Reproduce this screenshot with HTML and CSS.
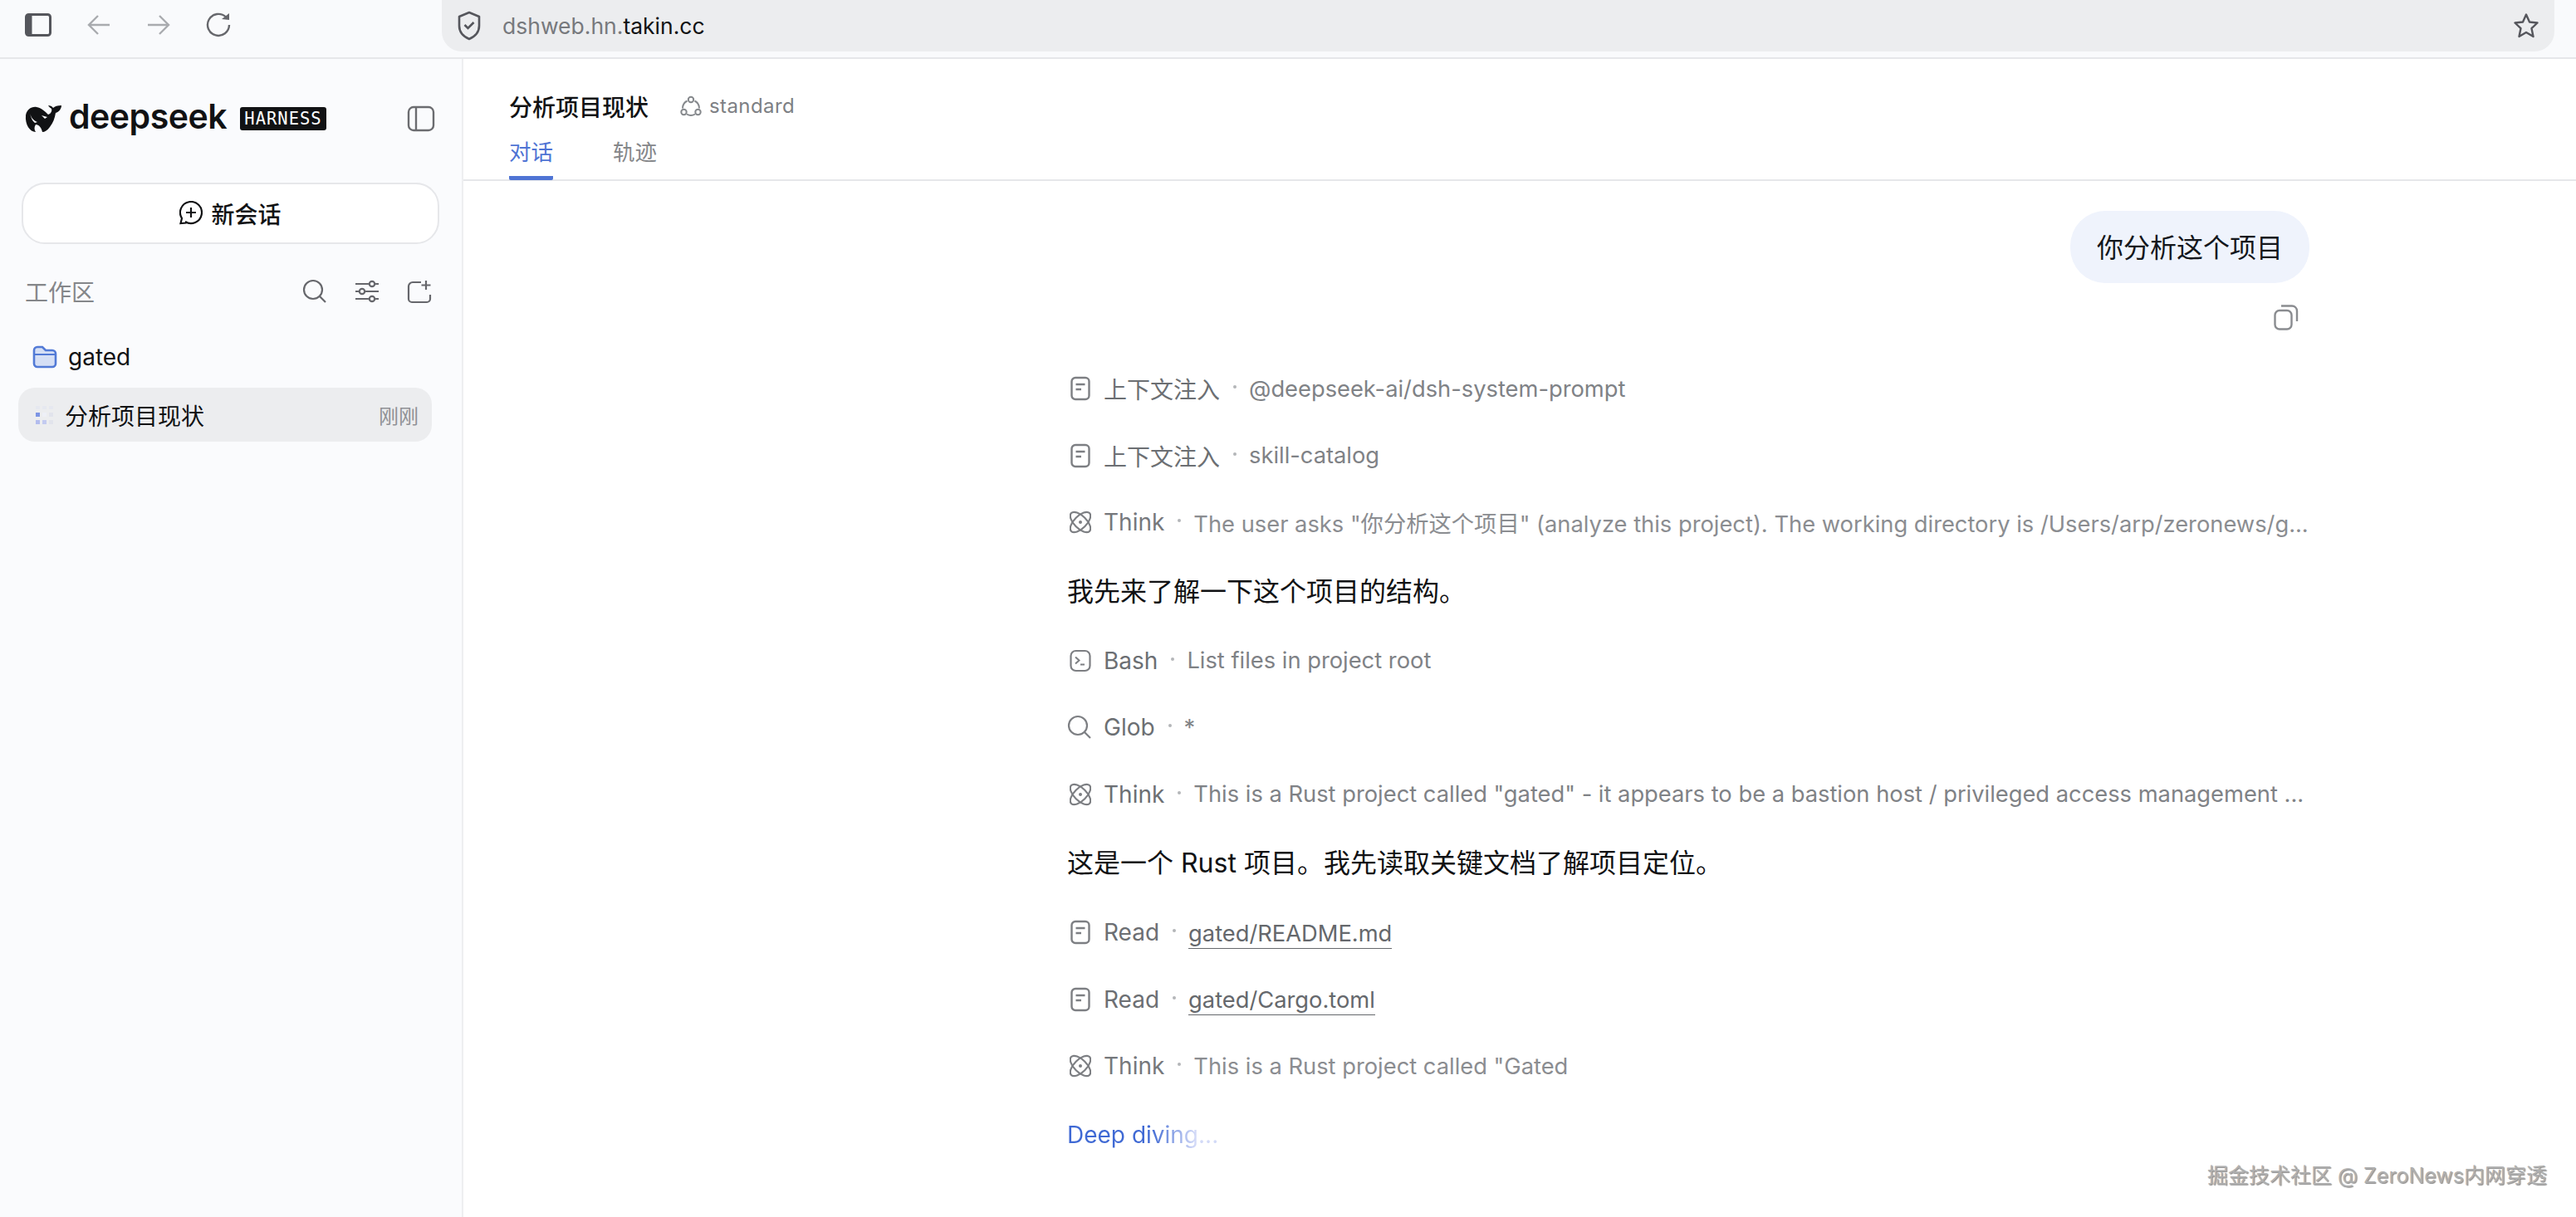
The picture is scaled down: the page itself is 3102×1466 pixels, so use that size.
FILE: index.html
```html
<!DOCTYPE html>
<html lang="en">
<head>
  <meta charset="UTF-8" />
  <meta name="viewport" content="width=device-width, initial-scale=1.0" />
  <title>DeepSeek Harness</title>
  <link rel="stylesheet" href="styles.css">
</head>
<body>
  <!-- shared icons -->
  <svg class="defs" width="0" height="0">
    <symbol id="i-doc" viewBox="0 0 26 30">
      <rect x="2.500" y="2" width="21" height="26" rx="4.500" fill="none" stroke="currentColor" stroke-width="2.400"/>
      <path d="M7.500 10h11M7.500 16h6.500" fill="none" stroke="currentColor" stroke-width="2.400"/>
    </symbol>
    <symbol id="i-think" viewBox="0 0 26 28">
      <g fill="none" stroke="currentColor" stroke-width="2.200">
        <ellipse cx="13" cy="14" rx="15.500" ry="7.500" transform="rotate(45 13 14)"/>
        <ellipse cx="13" cy="14" rx="15.500" ry="7.500" transform="rotate(-45 13 14)"/>
      </g>
      <circle cx="13" cy="14" r="2" fill="currentColor"/>
    </symbol>
    <symbol id="i-bash" viewBox="0 0 26 28">
      <rect x="1.500" y="2" width="23" height="24" rx="6" fill="none" stroke="currentColor" stroke-width="2.200"/>
      <path d="M7 9.500l4.500 4L7 17.500M13 18.500h5" fill="none" stroke="currentColor" stroke-width="2"/>
    </symbol>
    <symbol id="i-search" viewBox="0 0 30 30">
      <circle cx="13" cy="13" r="11" fill="none" stroke="currentColor" stroke-width="2.200"/>
      <path d="M21 21l7 7" fill="none" stroke="currentColor" stroke-width="2.200"/>
    </symbol>
  </svg>

  <!-- browser bar -->
  <header class="browser-bar">
    <div class="nav-icons">
      <svg class="icon-side" width="32" height="28" viewBox="0 0 32 28"><rect x="1.500" y="1.500" width="29" height="25" rx="3" fill="none" stroke="#55565c" stroke-width="3"/><rect x="1.500" y="1.500" width="7" height="25" rx="2" fill="#55565c"/></svg>
      <svg class="icon-arrow" width="30" height="28" viewBox="0 0 30 28"><path d="M28 14H3M14 3L3 14l11 11" fill="none" stroke="#a9abaf" stroke-width="2.400"/></svg>
      <svg class="icon-arrow" width="30" height="28" viewBox="0 0 30 28"><path d="M2 14h25M16 3l11 11-11 11" fill="none" stroke="#a9abaf" stroke-width="2.400"/></svg>
      <svg class="icon-reload" width="30" height="32" viewBox="0 0 30 32"><path d="M24 6.500A13 13 0 1 0 28 16" fill="none" stroke="#66676c" stroke-width="2.400"/><path d="M19 9l9-7v8z" fill="#66676c"/></svg>
    </div>
    <div class="address">
      <svg width="28" height="36" viewBox="0 0 28 36"><path d="M14 2l12 5v11c0 8-5 13-12 16C7 31 2 26 2 18V7z" fill="none" stroke="#55565c" stroke-width="2.600" stroke-linejoin="round"/><path d="M8.500 17l4 4 7-7" fill="none" stroke="#55565c" stroke-width="2.600"/></svg>
      <span class="url"><span class="url-dim">dshweb.hn.</span>takin.cc</span>
      <svg class="star" width="32" height="32" viewBox="0 0 32 32"><path d="M16 2.500l4 9 9.500 1-7 6.700 2 9.800-8.500-5-8.500 5 2-9.800-7-6.700 9.500-1z" fill="none" stroke="#55565c" stroke-width="2.400" stroke-linejoin="round"/></svg>
    </div>
  </header>

  <div class="app">
    <!-- sidebar -->
    <aside class="sidebar">
      <div class="brand">
        <svg class="whale" width="47" height="34" viewBox="0 0 47 34">
          <path d="M1 13C2 6 8 2 14 3c6 1 10 5 14 9 3-1 5-4 4-7-1-1-3-2-4-4 2 0 5 1 6 3 2-2 5-3 10-3 0 4-3 8-7 9-1 6-3 12-7 17-3 4-6 6-9 6-1-5-4-9-8-9-2 3-2 6 0 9C6 33 0 24 1 13Z" fill="#111214"/>
          <path d="M6 10c1 5 4 9 9 11l-3 1c-3-2-5-7-6-12ZM20 13l7 2-3 2z" fill="#fafbfd"/>
        </svg>
        <span class="wordmark">deepseek</span>
        <span class="badge">HARNESS</span>
        <svg class="collapse" width="34" height="32" viewBox="0 0 34 32"><rect x="2" y="2" width="30" height="28" rx="6" fill="none" stroke="#6b6c70" stroke-width="2.400"/><path d="M11 2v28" stroke="#6b6c70" stroke-width="2.400"/></svg>
      </div>
      <button class="new-chat">
        <svg width="28" height="30" viewBox="0 0 28 30"><path d="M7 25A13 13 0 1 0 3 21l-1.500 6 7-.5" fill="none" stroke="#111214" stroke-width="2.200"/><path d="M14 8v12M8 14h12" stroke="#111214" stroke-width="2.200"/></svg>
        新会话
      </button>
      <div class="ws-head">
        <span class="ws-title">工作区</span>
        <svg class="ws-icon" width="30" height="30"><use href="#i-search"/></svg>
        <svg class="ws-icon" width="30" height="30" viewBox="0 0 30 30"><g fill="none" stroke="currentColor" stroke-width="2.200"><path d="M1 6h17M24 6h5M1 15h5M12 15h17M1 24h17M24 24h5"/><circle cx="21" cy="6" r="3.200"/><circle cx="9" cy="15" r="3.200"/><circle cx="21" cy="24" r="3.200"/></g></svg>
        <svg class="ws-icon" width="30" height="30" viewBox="0 0 30 30"><path d="M17 4H7a5 5 0 0 0-5 5v15a4 4 0 0 0 4 4h18a4 4 0 0 0 4-4v-5M23 2v11M17.500 7.500h11" fill="none" stroke="currentColor" stroke-width="2.200"/></svg>
      </div>
      <div class="folder">
        <svg width="30" height="28" viewBox="0 0 30 28"><path d="M2 6a4 4 0 0 1 4-4h6l4 4h8a4 4 0 0 1 4 4v12a4 4 0 0 1-4 4H6a4 4 0 0 1-4-4z" fill="#d5dff5" stroke="#527ad6" stroke-width="2.600"/><path d="M2 11h26" stroke="#527ad6" stroke-width="2"/></svg>
        <span>gated</span>
      </div>
      <div class="session">
        <svg width="22" height="22" viewBox="0 0 22 22">
          <rect x="0" y="0" width="5" height="4" fill="#e6e8f0"/><rect x="8" y="0" width="5" height="4" fill="#e6e8f0"/><rect x="16" y="0" width="5" height="4" fill="#e6e8f0"/>
          <rect x="0" y="8" width="5" height="5" fill="#7d95e4"/><rect x="8" y="8" width="5" height="5" fill="#eef0f6"/><rect x="16" y="8" width="5" height="5" fill="#e2e4ec"/>
          <rect x="0" y="17" width="5" height="5" fill="#b3bdee"/><rect x="8" y="17" width="5" height="5" fill="#c3cbf0"/><rect x="16" y="17" width="5" height="5" fill="#e2e4ec"/>
        </svg>
        <span class="session-name">分析项目现状</span>
        <span class="session-time">刚刚</span>
      </div>
    </aside>

    <!-- main -->
    <main class="main">
      <div class="main-head">
        <div class="title-row">
          <span class="title">分析项目现状</span>
          <svg width="26" height="26" viewBox="0 0 26 26"><g fill="none" stroke="#85888c" stroke-width="2"><circle cx="13" cy="5" r="3.200"/><circle cx="4.500" cy="20" r="3.200"/><circle cx="21.500" cy="20" r="3.200"/><path d="M8.500 6.500A10 10 0 0 0 3 15.500M17.500 6.500A10 10 0 0 1 23 15.500M8 22.500a10 10 0 0 0 10 0"/></g></svg>
          <span class="mode">standard</span>
        </div>
        <div class="tabs">
          <span class="tab active">对话</span>
          <span class="tab">轨迹</span>
        </div>
      </div>

      <div class="thread">
        <div class="user-msg">
          <div class="bubble">你分析这个项目</div>
          <svg class="copy" width="30" height="32" viewBox="0 0 30 32"><rect x="1.500" y="8" width="20" height="22.500" rx="5.500" fill="none" stroke="#8a8c90" stroke-width="2.400"/><path d="M9 2.500h13a6 6 0 0 1 6 6V21" fill="none" stroke="#8a8c90" stroke-width="2.400"/></svg>
        </div>

        <div class="row"><svg class="ic"><use href="#i-doc"/></svg><span class="label">上下文注入</span><i class="dot"></i><span class="detail">@deepseek-ai/dsh-system-prompt</span></div>
        <div class="row"><svg class="ic"><use href="#i-doc"/></svg><span class="label">上下文注入</span><i class="dot"></i><span class="detail">skill-catalog</span></div>
        <div class="row faded"><svg class="ic"><use href="#i-think"/></svg><span class="label">Think</span><i class="dot"></i><span class="detail">The user asks "你分析这个项目" (analyze this project). The working directory is /Users/arp/zeronews/g...</span></div>
        <p class="para">我先来了解一下这个项目的结构。</p>
        <div class="row"><svg class="ic"><use href="#i-bash"/></svg><span class="label">Bash</span><i class="dot"></i><span class="detail">List files in project root</span></div>
        <div class="row"><svg class="ic ic-wide"><use href="#i-search"/></svg><span class="label">Glob</span><i class="dot"></i><span class="detail">*</span></div>
        <div class="row"><svg class="ic"><use href="#i-think"/></svg><span class="label">Think</span><i class="dot"></i><span class="detail">This is a Rust project called "gated" - it appears to be a bastion host / privileged access management ...</span></div>
        <p class="para">这是一个 Rust 项目。我先读取关键文档了解项目定位。</p>
        <div class="row"><svg class="ic"><use href="#i-doc"/></svg><span class="label">Read</span><i class="dot"></i><span class="detail link">gated/README.md</span></div>
        <div class="row"><svg class="ic"><use href="#i-doc"/></svg><span class="label">Read</span><i class="dot"></i><span class="detail link">gated/Cargo.toml</span></div>
        <div class="row faded"><svg class="ic"><use href="#i-think"/></svg><span class="label">Think</span><i class="dot"></i><span class="detail">This is a Rust project called "Gated</span></div>
        <div class="status"><span class="shimmer">Deep diving...</span></div>
      </div>
    </main>
  </div>

  <div class="watermark">掘金技术社区 @ ZeroNews内网穿透</div>
</body>
</html>
```

FILE: styles.css
```css
*{box-sizing:border-box;}
html,body{height:100%;}
body{margin:0;background:#fff;color:#111214;overflow:hidden;display:flex;flex-direction:column;
  font-family:Inter,"Noto Sans CJK SC",sans-serif;}
.defs{position:absolute;}
svg{display:block;flex:none;}

/* browser bar */
.browser-bar{height:71px;flex:none;display:flex;background:#f9fafc;border-bottom:2px solid #e6e7ea;padding-right:26px;}
.nav-icons{width:532px;display:flex;align-items:center;padding:0 0 10px 30px;}
.icon-arrow,.icon-reload{margin-left:42px;}
.address{flex:1;height:62px;background:#ecedef;border-radius:0 0 24px 24px;display:flex;align-items:center;padding:0 18px 0 19px;}
.url{margin-left:26px;font-size:26.500px;color:#111214;}
.url-dim{color:#77797d;}
.star{margin-left:auto;}

.app{flex:1;display:flex;min-height:0;}

/* sidebar */
.sidebar{width:558px;flex:none;background:#fafbfd;border-right:2px solid #eeeff1;padding:0 28px 0 22px;}
.brand{height:149px;margin-left:8px;margin-right:6px;display:flex;align-items:center;padding-bottom:6px;}
.whale{margin-right:6px;}
.wordmark{font-size:41px;font-weight:600;letter-spacing:-.5px;line-height:1;color:#111214;margin-top:-4px;}
.badge{margin-left:16px;height:28px;width:104px;background:#111214;color:#fff;border-radius:3px;font-family:"DejaVu Sans Mono",monospace;font-size:20.500px;letter-spacing:1px;line-height:28px;text-align:center;}
.collapse{margin-left:auto;margin-right:-2px;}
.new-chat{display:flex;align-items:center;justify-content:center;gap:10px;width:503px;height:74px;margin-left:4px;background:#fff;border:2px solid #e6e7ea;border-radius:28px;font-family:inherit;font-size:28px;font-weight:500;color:#111214;}
.ws-head{height:114px;display:flex;align-items:center;margin-right:8px;padding-left:8px;color:#66676c;}
.ws-title{font-size:28px;color:#85878a;margin-right:auto;}
.ws-icon{margin-left:33px;}
.folder{height:76px;display:flex;align-items:center;gap:13px;padding-left:17px;font-size:28px;margin-top:-16px;}
.session{height:65px;margin-right:8px;display:flex;align-items:center;background:#ecedef;border-radius:20px;padding:0 16px 0 21px;margin-top:-1px;font-size:28px;}
.session-name{margin-left:13px;}
.session-time{margin-left:auto;font-size:24px;color:#8f9195;}

/* main */
.main{flex:1;min-width:0;}
.main-head{height:147px;border-bottom:2px solid #e6e7ea;padding-left:55px;}
.title-row{height:90px;padding-top:23px;display:flex;align-items:center;}
.title{font-size:28px;font-weight:500;}
.title-row svg{margin-left:38px;}
.mode{margin-left:9px;font-size:24px;color:#7d8084;letter-spacing:.4px;}
.tabs{display:flex;gap:72px;}
.tab{height:56px;font-size:26.500px;line-height:44px;color:#85878a;}
.tab.active{color:#4f74d4;border-bottom:5px solid #4f74d4;border-radius:0 0 2px 2px;}

.thread{width:1496px;margin-left:727px;}
.user-msg{display:flex;flex-direction:column;align-items:flex-end;height:210px;padding-top:36px;}
.bubble{height:87px;padding:2px 32px 0;line-height:85px;background:#eff3fc;border-radius:42px;font-size:32px;color:#14171c;}
.copy{margin:25px 13px 0 0;}

.row{height:80.500px;display:flex;align-items:center;font-size:28px;color:#6c6f73;}
.ic{width:26px;height:30px;margin:0 15px 0 3px;color:#7d7f83;}
.ic-wide{width:30px;margin:0 14px 0 0;}
.label{flex:none;}
.dot{flex:none;width:4px;height:4px;margin:-4px 15px 0 16px;border-radius:50%;background:#b4b6b9;}
.detail{font-size:27.300px;color:#7f8286;white-space:nowrap;}
.detail.link{color:#65686c;border-bottom:1.500px solid #65686c;line-height:34px;margin-top:4px;}
.row.faded .label{color:#76787c;}
.row.faded .detail{color:#8b8d91;}
.para{margin:0;height:86px;line-height:86px;font-size:32px;color:#111214;}
.status{height:84px;display:flex;align-items:center;font-size:28px;}
.shimmer{background:linear-gradient(90deg,#3f69d4 0,#3f69d4 55%,#d3daf7 85%,#d3daf7 100%);-webkit-background-clip:text;background-clip:text;color:transparent;}

.watermark{position:absolute;right:35px;bottom:34px;font-size:25px;color:#b0b0b0;text-shadow:1px 1px 1px #888,-1px -1px 1px #fff;}
```
